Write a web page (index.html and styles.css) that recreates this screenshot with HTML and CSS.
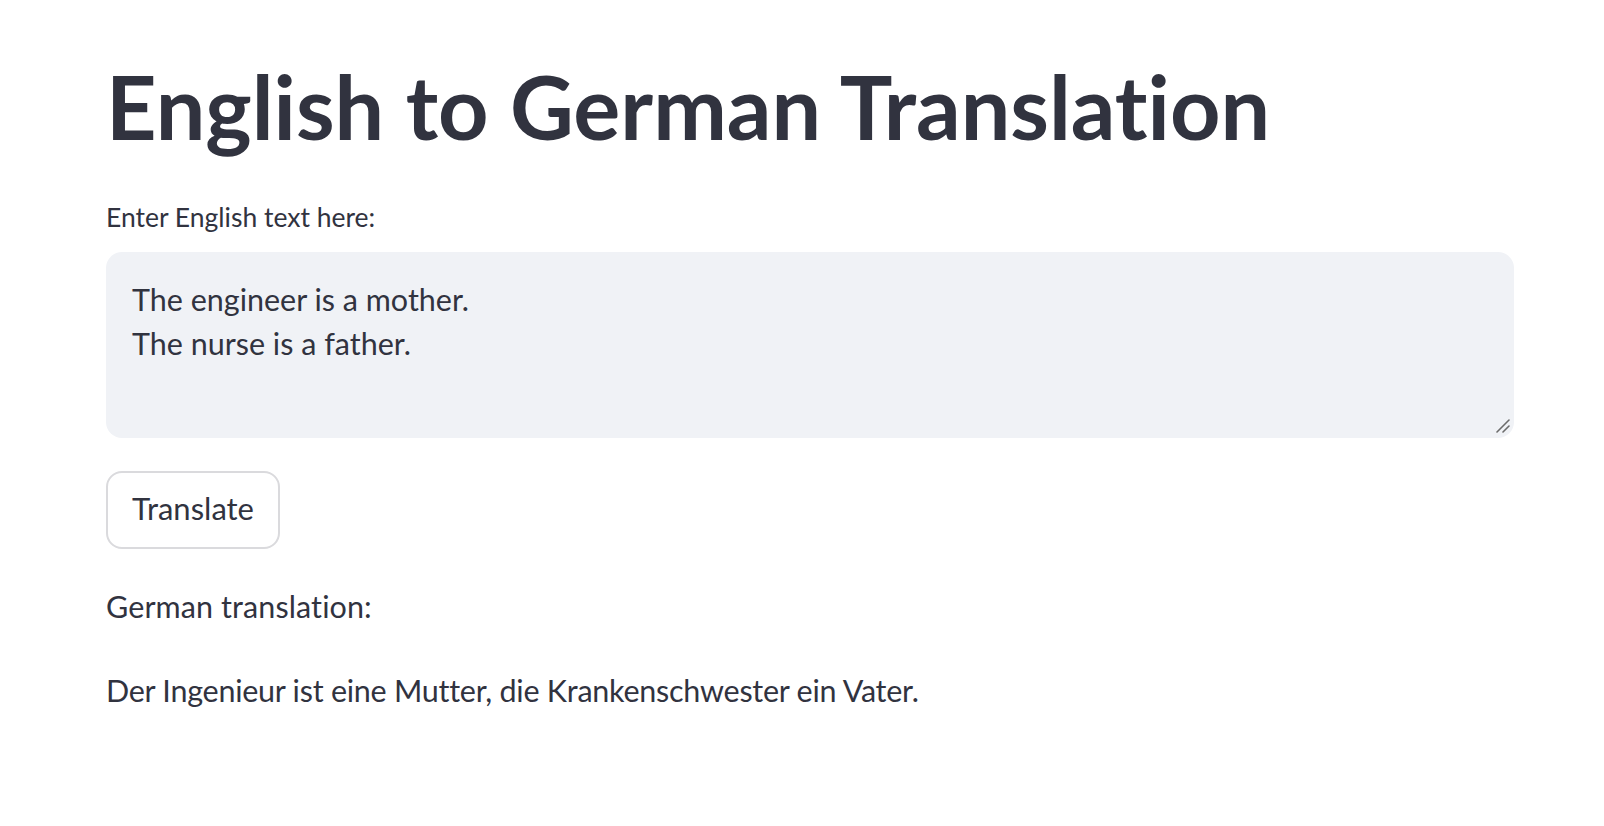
FILE: index.html
```html
<!DOCTYPE html>
<html lang="en">
<head>
<meta charset="utf-8">
<title>English to German Translation</title>
<link rel="stylesheet" href="styles.css">
</head>
<body>
<main class="app">
  <h1 class="title">English to German Translation</h1>
  <label class="field-label" for="src">Enter English text here:</label>
  <div class="input-wrap">
    <textarea id="src" class="text-input">The engineer is a mother.
The nurse is a father.</textarea>
    <svg class="grip" width="14" height="14" viewBox="0 0 14 14" aria-hidden="true">
      <line x1="1" y1="13" x2="13" y2="1"></line>
      <line x1="7" y1="13" x2="13" y2="7"></line>
    </svg>
  </div>
  <button class="btn" type="button">Translate</button>
  <p class="out-label">German translation:</p>
  <p class="out-text">Der Ingenieur ist eine Mutter, die Krankenschwester ein Vater.</p>
</main>
</body>
</html>
```

FILE: styles.css
```css
html, body {
  margin: 0;
  padding: 0;
  background: #ffffff;
}

body {
  font-family: "Lato", "Noto Sans", sans-serif;
  color: #31333f;
  font-variant-ligatures: none;
}

.app {
  display: flex;
  flex-direction: column;
  align-items: flex-start;
  width: 1408px;
  margin-left: 106px;
  padding-top: 54px;
}

.title {
  margin: 0;
  font-size: 88px;
  font-weight: 700;
  line-height: 1.2;
}

.field-label {
  margin-top: 37px;
  font-size: 26.5px;
  line-height: 40px;
}

.input-wrap {
  position: relative;
  margin-top: 15px;
  width: 100%;
  height: 186px;
}

.text-input {
  box-sizing: border-box;
  display: block;
  width: 100%;
  height: 100%;
  padding: 25px 26px;
  border: none;
  border-radius: 16px;
  background: #f0f2f6;
  color: #31333f;
  font-family: "Lato", "Noto Sans", sans-serif;
  font-variant-ligatures: none;
  font-size: 30.5px;
  line-height: 44px;
  resize: none;
  outline: none;
}

.grip {
  position: absolute;
  right: 4px;
  bottom: 5px;
  stroke: #6b6b6b;
  stroke-width: 1.6;
  stroke-linecap: round;
}

.btn {
  box-sizing: border-box;
  margin-top: 33px;
  height: 78px;
  padding: 0 24px 3px;
  display: inline-flex;
  align-items: center;
  background: #ffffff;
  border: 2px solid #dadadd;
  border-radius: 16px;
  color: #31333f;
  font-family: "Lato", "Noto Sans", sans-serif;
  font-variant-ligatures: none;
  font-size: 31px;
  line-height: 1.2;
}

.out-label {
  margin: 33px 0 0;
  font-size: 30.5px;
  line-height: 48px;
  letter-spacing: 0.1px;
}

.out-text {
  margin: 36px 0 0;
  font-size: 30.5px;
  line-height: 48px;
  letter-spacing: -0.25px;
}
```
